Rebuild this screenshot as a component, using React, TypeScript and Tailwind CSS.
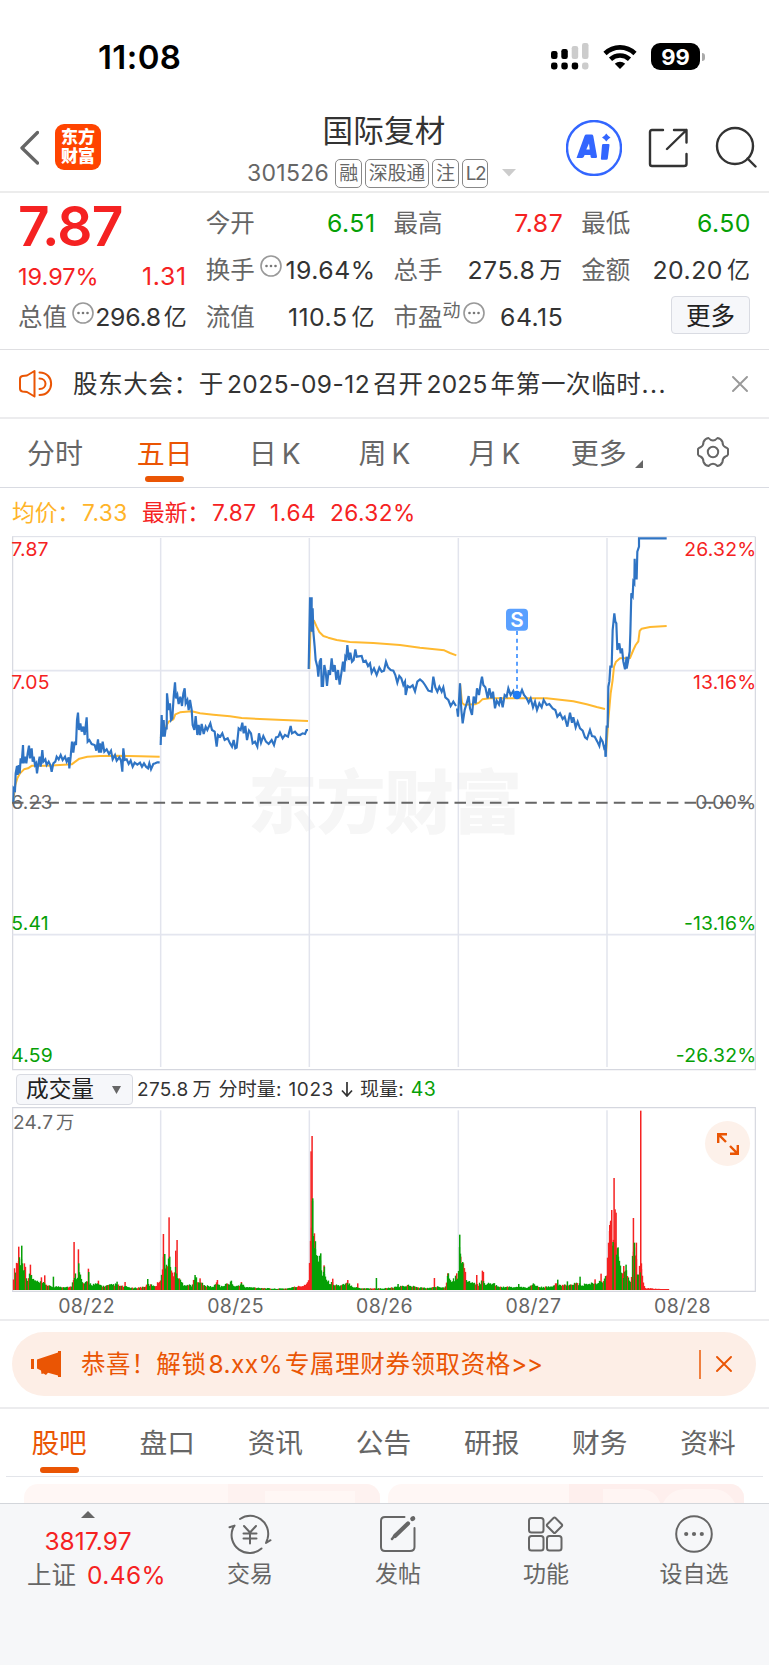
import type { ReactNode } from "react";

const RED = "#f52222";
const GREEN = "#06a006";

/* ---------- chart data (3x device pixels) ---------- */

const PRICE_LINES = [
  "40,965 41,925 45,930 47,880 51,858 53,885 56,855 59,880 62,835 65,850 69,795 71,850 75,830 79,850 83,820 87,797 90,835 95,805 98,845 101,830 105,855 108,850 111,880 115,850 119,830 122,860 127,810 130,845 136,838 140,855 146,845 151,855 155,875 160,850 166,845 170,830 176,838 182,825 188,840 195,830 200,845 206,832 208,865 212,830 216,785 220,818 224,785 228,795 231,720 234,698 237,750 241,730 245,755 250,740 254,765 260,712 263,785 268,780 275,792 284,795 289,812 294,778 297,818 300,790 303,818 308,785 313,815 320,808 327,822 333,812 338,838 345,825 350,842 358,832 363,842 367,875 370,805 374,840 380,838 386,852 392,842 398,860 404,848 412,854 420,848 426,860 432,850 438,860 444,865 448,850 453,868 460,852 466,850 472,847 479,847",
  "482,795 485,705 488,770 491,720 494,770 497,745 500,745 501,640 506,690 510,670 513,720 517,715 521,650 525,607 528,655 532,645 536,672 541,650 546,678 550,640 554,625 557,670 562,660 566,690 570,660 575,690 578,735 583,750 587,708 592,765 596,735 600,765 605,732 611,762 617,740 622,750 631,730 636,750 644,755 650,800 654,765 661,770 667,760 674,780 683,775 690,790 696,800 701,780 706,805 710,803 716,745 722,750 727,728 731,760 736,738 741,780 747,752 753,760 758,790 765,785 772,800 777,760 783,788 790,768 798,785 806,792 815,780 822,795 828,772 835,770 840,758 848,775 855,765 864,770 872,738 876,760 885,755 893,764 900,765 908,760 915,762 920,750 924,750",
  "926,567 930,355 935,355 935,455 938,385 940,455 944,500 947,540 952,560 955,590 959,545 963,535 965,618 969,618 973,555 977,575 981,618 986,570 990,585 995,535 999,575 1004,555 1009,600 1014,570 1019,614 1024,580 1029,545 1033,575 1036,530 1039,535 1042,495 1047,540 1051,518 1056,545 1061,540 1066,508 1070,530 1085,528 1090,545 1097,542 1104,558 1110,550 1115,578 1122,565 1130,585 1138,563 1145,575 1152,572 1158,545 1164,562 1172,570 1180,572 1186,585 1192,608 1198,588 1204,595 1210,615 1215,605 1217,645 1223,618 1230,622 1238,616 1245,634 1252,605 1260,598 1268,605 1275,615 1285,632 1295,635 1300,590 1306,622 1312,635 1318,620 1325,635 1330,622 1336,652 1345,660 1352,678 1360,665 1368,678",
  "1371,685 1374,710 1380,610 1384,690 1388,730 1394,690 1400,670 1406,648 1410,685 1416,705 1421,650 1427,670 1431,625 1437,645 1443,605 1446,590 1450,615 1456,622 1463,655 1468,625 1474,655 1479,635 1485,685 1490,662 1497,674 1502,652 1508,682 1514,645 1520,650 1525,625 1532,645 1540,633 1546,650 1551,643 1556,650 1560,645 1566,630 1572,645 1580,655 1586,668 1592,655 1599,682 1605,665 1611,690 1618,670 1625,682 1631,660 1640,675 1648,672 1658,685 1666,690 1672,710 1680,700 1688,717 1694,710 1702,740 1710,698 1716,728 1720,712 1727,742 1733,725 1740,745 1748,752 1755,772 1761,777 1770,750 1776,768 1784,770 1792,785 1798,798 1802,775 1808,785 1812,802 1815,795 1817,830",
  "1817,830 1820,740 1823,740 1825,620 1828,605 1831,560 1835,560 1838,450 1843,400 1846,425 1849,430 1852,510 1858,490 1862,520 1866,505 1870,545 1875,568 1880,530 1880,566 1884,545 1889,515 1891,460 1894,340 1898,348 1900,305 1903,310 1904,236 1906,295 1910,295 1912,215 1917,200 1917,175 2000,175",
];

const AVG_LINES = [
  "40,960 46,915 52,895 60,880 72,868 84,865 96,857 140,857 180,855 215,853 230,842 238,836 262,830 300,828 350,827 420,829 479,830",
  "482,775 486,760 494,755 500,735 506,725 520,718 526,703 540,697 575,694 600,700 640,704 690,709 725,714 780,717 850,720 924,723",
  "928,567 931,460 936,420 942,422 950,440 958,456 970,468 985,473 1010,480 1050,486 1120,489 1200,495 1260,503 1333,511 1350,519 1369,526",
  "1380,610 1386,668 1392,674 1425,673 1437,668 1447,658 1470,655 1560,655 1640,655 1680,659 1720,664 1760,673 1790,681 1815,687",
  "1818,820 1825,720 1832,640 1838,600 1842,560 1848,545 1860,535 1890,534 1900,510 1907,495 1915,484 1919,453 1925,446 1950,441 2000,438",
];

const DAY_LINES = [482, 928, 1375, 1821];

// rough outline of the volume profile: [x, height]
const VOLUME_OUTLINE: [number, number][] = [
  [40, 45], [50, 90], [58, 100], [66, 90], [74, 75], [82, 35], [92, 50], [100, 32], [115, 24], [135, 20], [150, 11],
  [215, 10], [222, 50], [228, 45], [238, 55], [248, 20], [262, 24], [275, 18], [295, 18], [310, 12], [345, 18],
  [365, 12], [380, 10], [400, 6], [430, 10], [445, 17], [468, 14], [480, 35], [486, 60], [492, 105], [500, 70],
  [508, 95], [515, 50], [526, 62], [535, 38], [550, 18], [575, 15], [585, 38], [600, 28], [612, 14], [640, 10],
  [650, 25], [662, 10], [690, 24], [705, 10], [725, 20], [735, 9], [780, 7], [820, 4], [860, 5], [880, 9],
  [910, 14], [926, 30], [930, 200], [938, 250], [943, 150], [950, 110], [960, 95], [966, 60], [973, 55], [982, 26],
  [1000, 20], [1020, 13], [1045, 22], [1060, 10], [1080, 6], [1120, 5], [1150, 5], [1180, 8], [1195, 10], [1225, 15],
  [1255, 8], [1290, 6], [1300, 10], [1335, 10], [1343, 45], [1352, 28], [1372, 42], [1378, 120], [1384, 90],
  [1392, 75], [1400, 30], [1415, 22], [1435, 15], [1448, 36], [1456, 20], [1482, 20], [1500, 10], [1550, 9],
  [1580, 8], [1602, 16], [1620, 9], [1650, 10], [1665, 18], [1685, 15], [1705, 14], [1720, 22], [1745, 16],
  [1770, 20], [1785, 22], [1800, 25], [1818, 42], [1822, 90], [1830, 190], [1840, 150], [1848, 150], [1856, 100],
  [1862, 65], [1870, 45], [1880, 60], [1888, 30], [1893, 25], [1897, 90], [1905, 120], [1912, 55], [1922, 70],
  [1930, 22], [1937, 6], [1965, 4], [2006, 2],
];

const VOLUME_SPIKES: [number, number, string][] = [
  [56, 130, RED], [65, 133, GREEN], [73, 80, RED], [91, 76, RED], [124, 38, RED], [134, 44, RED], [160, 40, GREEN],
  [222, 144, RED], [235, 122, RED], [236, 80, GREEN], [265, 64, RED], [266, 54, GREEN], [295, 28, RED],
  [351, 25, GREEN], [375, 24, RED], [443, 33, GREEN], [490, 168, RED], [494, 108, GREEN], [507, 218, RED],
  [509, 100, GREEN], [531, 150, RED], [527, 118, RED], [585, 45, GREEN], [600, 35, RED], [652, 30, RED],
  [694, 28, GREEN], [724, 24, RED], [933, 416, RED], [936, 462, RED], [938, 275, GREEN], [943, 170, RED],
  [946, 122, GREEN], [962, 110, GREEN], [972, 74, RED], [973, 70, GREEN], [998, 34, RED], [1043, 30, RED],
  [1073, 20, RED], [1129, 36, GREEN], [1194, 18, GREEN], [1303, 36, RED], [1343, 50, RED], [1345, 50, GREEN],
  [1370, 50, RED], [1379, 166, GREEN], [1382, 100, RED], [1388, 84, GREEN], [1430, 45, RED], [1447, 58, RED],
  [1450, 54, RED], [1556, 18, GREEN], [1600, 20, GREEN], [1673, 31, GREEN], [1702, 26, GREEN], [1740, 40, GREEN],
  [1785, 32, RED], [1803, 49, RED], [1829, 195, RED], [1832, 208, RED], [1835, 240, RED], [1842, 336, RED],
  [1845, 242, RED], [1848, 232, RED], [1839, 144, GREEN], [1854, 128, GREEN], [1871, 72, RED], [1878, 76, GREEN],
  [1900, 216, RED], [1903, 142, GREEN], [1909, 142, RED], [1922, 538, RED], [1924, 80, RED],
];

function outlineAt(x: number) {
  for (let i = 1; i < VOLUME_OUTLINE.length; i++) {
    const [x1, h1] = VOLUME_OUTLINE[i];
    const [x0, h0] = VOLUME_OUTLINE[i - 1];
    if (x <= x1) return h0 + ((h1 - h0) * (x - x0)) / (x1 - x0);
  }
  return 0;
}

// days open / rally with mostly red bars, everything else leans green
function redShare(x: number) {
  if (x < 56 || (x > 465 && x < 500) || (x > 510 && x < 532)) return 0.8;
  if (x > 890 && x < 936) return 0.95;
  if (x > 1820 && x < 1850) return 0.85;
  if (x > 1890) return x > 1925 ? 1 : 0.5;
  return 0.2;
}

const volumeBars = Array.from({ length: 656 }, (_, i) => {
  const x = 40 + i * 3;
  const a = Math.abs(Math.sin(i * 12.9898) * 43758.5453) % 1;
  const b = Math.abs(Math.sin(i * 78.233) * 12543.123) % 1;
  const h = Math.max(3, outlineAt(x) * (0.7 + 0.45 * a));
  return { x, h, color: b < redShare(x) ? RED : GREEN };
});

/* ---------- small icons ---------- */

function DotsIcon({ className = "" }: { className?: string }) {
  return (
    <svg viewBox="0 0 22 22" className={`h-[22px] w-[22px] shrink-0 ${className}`} fill="none">
      <circle cx="11" cy="11" r="10" stroke="#999" strokeWidth="1.6" />
      <circle cx="6.5" cy="11" r="1.3" fill="#777" />
      <circle cx="11" cy="11" r="1.3" fill="#777" />
      <circle cx="15.5" cy="11" r="1.3" fill="#777" />
    </svg>
  );
}

function CloseIcon({ color, width }: { color: string; width: number }) {
  return (
    <svg viewBox="0 0 16 16" className="h-4 w-4" stroke={color} strokeWidth={width} strokeLinecap="round">
      <path d="M1 1L15 15M15 1L1 15" />
    </svg>
  );
}

function StatusBar() {
  return (
    <div className="flex h-[108px] items-start pt-[39px]">
      <span className="ml-[98px] w-[453px] text-[33px] font-semibold leading-9 tracking-[0.4px] text-black">11:08</span>
      <svg viewBox="0 0 38 28" className="mt-1 h-7 w-[38px]">
        <rect x="0" y="8" width="6.5" height="8" rx="2.2" />
        <rect x="10.3" y="6" width="6.5" height="10" rx="2.2" />
        <rect x="20.7" y="3" width="6.5" height="13" rx="2.2" fill="#ccc" />
        <rect x="31" y="0" width="6.5" height="16" rx="2.2" fill="#ccc" />
        <rect x="0" y="19.5" width="6.5" height="7" rx="2.4" />
        <rect x="10.3" y="19.5" width="6.5" height="7" rx="2.4" />
        <rect x="20.7" y="19.5" width="6.5" height="7" rx="2.4" />
        <rect x="31" y="19.5" width="6.5" height="7" rx="2.4" fill="#ccc" />
      </svg>
      <svg viewBox="0 0 34 26" className="ml-3.5 mt-[5px] h-[26px] w-[34px]" fill="none" stroke="#000" strokeWidth="4.6">
        <path d="M2 9.5C10.5 1.3 23.5 1.3 32 9.5" />
        <path d="M7.5 15.3C13 10.2 21 10.2 26.5 15.3" />
        <path d="M17 25L11.8 19.7C14.7 17 19.3 17 22.2 19.7Z" fill="#000" stroke="none" />
      </svg>
      <div className="ml-[14px] mt-[4px] flex h-[27px] w-[49px] items-center justify-center rounded-[9px] bg-black text-[22px] font-bold leading-none text-white">
        99
      </div>
      <div className="ml-0.5 mt-[14px] h-2 w-[3px] rounded-r-full bg-[#aaa]" />
    </div>
  );
}

function Badge({ children }: { children: ReactNode }) {
  return (
    <span className="flex h-[29px] items-center rounded-[5px] border border-[#888] px-[3px] text-[19px] leading-none tracking-[-0.3px] text-[#666]">
      {children}
    </span>
  );
}

function Header() {
  return (
    <header className="flex h-[85px] border-b-2 border-[#ececec]">
      <div className="flex w-[248px] items-start pl-[19px] pt-4">
        <svg viewBox="0 0 20 36" className="mt-[6px] h-9 w-5" fill="none" stroke="#666" strokeWidth="3.3" strokeLinecap="round" strokeLinejoin="round">
          <path d="M18.5 2.5L3 18L18.5 33" />
        </svg>
        <div className="ml-4 flex h-[46px] w-[46px] flex-col items-center justify-center rounded-[9px] bg-[#ff4400] text-[17px] font-black leading-[19px] text-white">
          <span>东方</span>
          <span>财富</span>
        </div>
      </div>

      <div className="flex w-[272px] flex-col items-center">
        <h1 className="mt-[3px] h-[45px] text-[30.5px] leading-10 tracking-[0.2px] text-[#333]">国际复材</h1>
        <div className="mt-[2px] flex h-[30px] items-center gap-[3px] whitespace-nowrap pr-[5px]">
          <span className="mr-[3px] text-[23px] tracking-[0.3px] text-[#666]">301526</span>
          <Badge>融</Badge>
          <Badge>深股通</Badge>
          <Badge>注</Badge>
          <Badge>
            <span className="-mr-px tracking-[-1.5px]">L2</span>
          </Badge>
          <svg viewBox="0 0 14 8" className="ml-[11px] h-2 w-[14px]" fill="#ccc">
            <path d="M0 0H14L7 7.5Z" />
          </svg>
        </div>
      </div>

      <div className="flex flex-1 items-start pl-[46px] pt-3">
        <svg viewBox="0 0 56 56" className="h-14 w-14" fill="#3366ff">
          <circle cx="28" cy="28" r="27" fill="none" stroke="#3366ff" strokeWidth="2.4" />
          <path fillRule="evenodd" d="M10.5 38L18.5 16Q19 14.6 20.5 14.6H25.5Q27 14.6 27.3 16L31 36.5Q31.2 38 29.7 38H26Q24.8 38 24.6 36.8L24.4 35H18.6L18 36.6Q17.5 38 16 38ZM20.3 29.5H23.7L23 23.5Z" />
          <path d="M37.3 24H42.5Q43.7 24 43.5 25.2L41.8 38.6Q41.6 39.8 40.4 39.8H36Q34.7 39.8 34.9 38.6L36 25.2Q36.1 24 37.3 24Z" />
          <path d="M40.3 13.5L42.2 15.8L44.5 17.5L42.2 19.3L40.3 21.6L38.4 19.3L36 17.5L38.4 15.8Z" />
        </svg>
        <svg viewBox="0 0 40 40" className="ml-[26px] mt-2 h-10 w-10" fill="none" stroke="#333" strokeWidth="2.4" strokeLinecap="round" strokeLinejoin="round">
          <path d="M15 2H4Q2 2 2 4V36Q2 38 4 38H36Q38.5 38 38.5 36V26" />
          <path d="M26 2H38.5V14.5M38.5 2L19 21" />
        </svg>
        <svg viewBox="0 0 42 42" className="ml-[27px] mt-[6px] h-[42px] w-[42px]" fill="none" stroke="#333" strokeWidth="2.4" strokeLinecap="round">
          <circle cx="20" cy="20" r="18" />
          <path d="M32.5 32.5L40.5 40.5" />
        </svg>
      </div>
    </header>
  );
}

/* ---------- quote ---------- */

function QuoteCell({ label, extra, value, unit, color = "text-[#333]", tight = false }: {
  label: string;
  extra?: ReactNode;
  value: string;
  unit?: string;
  color?: string;
  tight?: boolean;
}) {
  return (
    <div className="flex h-[47px] items-center whitespace-nowrap leading-none">
      <span className="text-[24.5px] text-[#666]">{label}</span>
      {extra}
      <span
        className={`ml-auto text-[24.8px] ${tight ? "tracking-[-0.3px]" : "tracking-[0.5px]"} ${unit ? "" : "-mr-px"} ${color}`}
      >
        {value}
      </span>
      {unit && <span className={`text-[23px] text-[#333] ${tight ? "ml-[3px]" : "ml-[4px]"}`}>{unit}</span>}
    </div>
  );
}

function Quote() {
  return (
    <section className="grid h-[157px] grid-cols-4 gap-x-[19px] border-b border-[#dfdfe2] pl-[18px] pr-[19px]">
      <div>
        <div className="flex h-[66px] items-center text-[55px] font-semibold tracking-[-0.8px] text-[#f52222]">7.87</div>
        <div className="flex h-[35px] items-center justify-between text-[24.8px] leading-none text-[#f52222]">
          <span className="text-[23.5px]">19.97%</span>
          <span className="tracking-[0.7px]">1.31</span>
        </div>
        <QuoteCell label="总值" extra={<DotsIcon className="-mt-2.5 ml-[5px]" />} value="296.8" unit="亿" tight />
      </div>
      <div className="pt-[7px]">
        <QuoteCell label="今开" value="6.51" color="text-[#06a006]" />
        <QuoteCell label="换手" extra={<DotsIcon className="-mt-2.5 ml-[5px]" />} value="19.64%" />
        <QuoteCell label="流值" value="110.5" unit="亿" />
      </div>
      <div className="pt-[7px]">
        <QuoteCell label="最高" value="7.87" color="text-[#f52222]" />
        <QuoteCell label="总手" value="275.8" unit="万" />
        <QuoteCell
          label="市盈"
          extra={
            <>
              <span className="-mt-3.5 text-[18px] text-[#666]">动</span>
              <DotsIcon className="-mt-2.5 ml-[2px]" />
            </>
          }
          value="64.15"
        />
      </div>
      <div className="pt-[7px]">
        <QuoteCell label="最低" value="6.50" color="text-[#06a006]" />
        <QuoteCell label="金额" value="20.20" unit="亿" />
        <button className="ml-auto mt-[2px] flex h-[38px] w-[79px] items-center justify-center rounded-[4px] border border-[#d9dbe2] bg-[#f6f7fa] pt-[2px] text-[24.5px] leading-none text-[#222]">
          更多
        </button>
      </div>
    </section>
  );
}

function Notice() {
  return (
    <section className="flex h-[69px] items-center border-b-2 border-[#ececee] pr-[21px] pt-px">
      <svg viewBox="0 0 34 28" className="ml-[19px] h-7 w-[34px]" fill="none" stroke="#ea5504" strokeWidth="2" strokeLinecap="round" strokeLinejoin="round">
        <path d="M15.5 1L8 5.5L3.5 6Q1 6.5 1 9V18.5Q1 21 3.5 21.5L8 22L15.5 26.5Z" />
        <path d="M20.5 2.5C36 2.5 36 25 20.5 25M20.5 8.5C28.5 8.5 28.5 19 20.5 19" />
      </svg>
      <div className="ml-[20px] flex items-center whitespace-nowrap text-[24.5px] leading-none tracking-[0.65px] text-[#333]">
        <span>股东大会：</span>
        <span>于</span>
        <span className="mx-[3px] tracking-[0.5px]">2025-09-12</span>
        <span>召开</span>
        <span className="mx-[3px] tracking-[0.2px]">2025</span>
        <span>年第一次临时<span className="tracking-[1.5px]">...</span></span>
      </div>
      <span className="ml-auto">
        <CloseIcon color="#999" width={1.9} />
      </span>
    </section>
  );
}

const CHART_TABS = [
  { name: "分时" },
  { name: "五日", active: true },
  { name: "日", suffix: "K" },
  { name: "周", suffix: "K" },
  { name: "月", suffix: "K" },
];

function ChartTabs() {
  return (
    <nav className="grid h-[69px] grid-cols-7 border-b border-[#d9dbe2] text-[28px] leading-none text-[#666]">
      {CHART_TABS.map((t) => (
        <div
          key={t.name}
          className={`relative flex items-center justify-center pt-[2px] ${t.active ? "text-[#ea5504]" : ""}`}
        >
          {t.name}
          {t.suffix && <span className="ml-[5px]">{t.suffix}</span>}
          {t.active && <span className="absolute bottom-[5px] h-[6px] w-[39px] rounded-full bg-[#ea5504]" />}
        </div>
      ))}
      <div className="flex items-center justify-center pl-[5px] pt-[2px]">
        更多
        <svg viewBox="0 0 8 8" className="ml-2 mt-[19px] h-2 w-2" fill="#666">
          <path d="M8 0V8H0Z" />
        </svg>
      </div>
      <div className="flex items-center justify-center pb-[3px] pr-[3px]">
        <svg viewBox="0 0 32 32" className="h-8 w-8" fill="none" stroke="#666" strokeWidth="2" strokeLinejoin="round">
          <path d="M11.5 2Q13.5 4.5 16 4.5Q18.5 4.5 20.5 2Q24 2.5 25.5 6Q25.5 9.5 28 11Q30.5 12 31 13Q31 16 31 18.5Q30.5 20 28.5 20.5Q25.5 22 25.5 26Q24 29.5 20.5 30Q18.5 27.7 16 27.7Q13.5 27.7 11.5 30Q8 29.5 6.5 26Q6.5 22 3.5 20.5Q1.5 20 1 18.5Q1 16 1 13Q1.5 12 4 11Q6.5 9.5 6.5 6Q8 2.5 11.5 2Z" />
          <circle cx="16" cy="16" r="5.2" />
        </svg>
      </div>
    </nav>
  );
}

/* ---------- charts ---------- */

function Legend() {
  return (
    <div className="flex h-[48px] items-center whitespace-nowrap pl-[12px] pt-[2px] text-[22.7px] leading-none text-[#f52222]">
      <span className="w-[70px] text-[#ffb429]">均价：</span>
      <span className="w-[60px] tracking-[0.4px] text-[#ffb429]">7.33</span>
      <span className="w-[70px]">最新：</span>
      <span className="w-[58px] tracking-[0.4px]">7.87</span>
      <span className="w-[60px] tracking-[0.6px]">1.64</span>
      <span className="tracking-[0.4px]">26.32%</span>
    </div>
  );
}

const AXIS_LABELS = [
  { y: 228, left: "7.87", right: "26.32%", color: RED },
  { y: 627, left: "7.05", right: "13.16%", color: RED },
  { y: 986, left: "6.23", right: "0.00%", color: "#666" },
  { y: 1349, left: "5.41", right: "-13.16%", color: GREEN },
  { y: 1746, left: "4.59", right: "-26.32%", color: GREEN },
];

function PriceChart() {
  return (
    <svg viewBox="0 168 2307 1605" className="h-[535px] w-[769px]" fill="none">
      <text x="744" y="1044" fontSize="208" fontWeight="900" fill="#f6f6f6" textLength="822">
        东方财富
      </text>
      <path d="M36 170H2266" stroke="#dcdee6" strokeWidth="3" />
      <path d="M38 170V1769H2266V170" stroke="#d5d7df" strokeWidth="3.5" />
      <path d="M38 572H2266M38 1364H2266" stroke="#e4e6ef" strokeWidth="5" />
      {DAY_LINES.map((x) => (
        <path key={x} d={`M${x} 174V1761`} stroke="#e2e4ed" strokeWidth="4.5" />
      ))}
      {AXIS_LABELS.map((l) => (
        <g key={l.y} fontSize="58" letterSpacing="0.6" fill={l.color}>
          <text x="34" y={l.y}>{l.left}</text>
          <text x="2269" y={l.y} textAnchor="end">{l.right}</text>
        </g>
      ))}
      <path d="M36 968H2266" stroke="#666" strokeWidth="6" strokeDasharray="34.5 18.6" />
      {AVG_LINES.map((p) => (
        <polyline key={p} points={p} stroke="#ffb930" strokeWidth="6" strokeLinejoin="round" />
      ))}
      {PRICE_LINES.map((p) => (
        <polyline key={p} points={p} stroke="#2f74c4" strokeWidth="6.5" />
      ))}

      {/* sell marker */}
      <path d="M1551 453V632" stroke="#5aa0ff" strokeWidth="6" strokeDasharray="12 11" />
      <circle cx="1551" cy="645" r="13" fill="#1f7cf5" />
      <rect x="1518" y="386" width="66" height="66" rx="12" fill="#5aa0ff" />
      <text x="1551" y="442" fontSize="62" fontWeight="600" fill="#fff" textAnchor="middle">S</text>
    </svg>
  );
}

function VolumeHeader() {
  return (
    <div className="flex h-[36px] items-center whitespace-nowrap pl-4 pt-px text-[19px] leading-none tracking-[0.1px] text-[#333]">
      <div className="mr-[4px] flex h-[31px] w-[117px] items-center rounded-[4px] border border-[#d9dbe2] bg-[#f6f7fa] pl-[9px] text-[22.7px] tracking-normal text-[#222]">
        成交量
        <svg viewBox="0 0 9 8" className="ml-[18px] h-2 w-[9px]" fill="#666">
          <path d="M0 0H9L4.5 8Z" />
        </svg>
      </div>
      <span className="tracking-[0.3px]">275.8</span>
      <span className="ml-1">万</span>
      <span className="ml-[7px]">分时量:</span>
      <span className="ml-[7px] tracking-[0.6px]">1023</span>
      <svg viewBox="0 0 12 15" className="mx-[7px] h-[15px] w-3" fill="none" stroke="#333" strokeWidth="1.7">
        <path d="M6 0V14M1 8.5L6 14L11 8.5" />
      </svg>
      <span>现量:</span>
      <span className="ml-[7px] text-[19.5px] tracking-[0.5px] text-[#06a006]">43</span>
    </div>
  );
}

function VolumeChart() {
  return (
    <div className="relative h-[186px]">
      <svg viewBox="0 141 2307 558" className="h-[186px] w-[769px]" fill="none">
        <path d="M38 694V143H2266V694Z" stroke="#d5d7df" strokeWidth="3.5" />
        {DAY_LINES.map((x) => (
          <path key={x} d={`M${x} 151V690`} stroke="#e2e4ed" strokeWidth="4.5" />
        ))}
        <text x="39" y="208" fontSize="57" letterSpacing="1" fill="#666">24.7</text>
        <text x="168" y="208" fontSize="55" fill="#666">万</text>
        {VOLUME_SPIKES.filter((s) => s[2] === RED).map(([x, h, color]) => (
          <rect key={`${x}-${h}`} x={x - 2} y={690 - h} width="4.5" height={h} fill={color} />
        ))}
        {volumeBars.map((b) => (
          <rect key={b.x} x={b.x - 1.5} y={690 - b.h} width="4" height={b.h} fill={b.color} />
        ))}
        {VOLUME_SPIKES.filter((s) => s[2] === GREEN).map(([x, h, color]) => (
          <rect key={`${x}-${h}`} x={x - 2} y={690 - h} width="4.5" height={h} fill={color} />
        ))}
      </svg>
      <button className="absolute right-[19px] top-[14px] flex h-[45px] w-[45px] items-center justify-center rounded-full bg-[#fdf1ea]">
        <svg viewBox="0 0 22 22" className="h-[22px] w-[22px]" fill="none" stroke="#ea5504" strokeWidth="2.4">
          <path d="M1.2 10V1.2H10M1.2 1.2L9 9M13 20.8H20.8V12M20.8 20.8L13 13" />
        </svg>
      </button>
    </div>
  );
}

function Dates() {
  return (
    <div className="flex h-[28px] items-center border-b-2 border-[#ececee] px-[12px] pt-[2px] text-[19.5px] leading-none tracking-[0.3px] text-[#666]">
      {["08/22", "08/25", "08/26", "08/27", "08/28"].map((d) => (
        <span key={d} className="flex-1 text-center">{d}</span>
      ))}
    </div>
  );
}

/* ---------- lower part ---------- */

function Banner() {
  return (
    <section className="h-[88px] border-b-2 border-[#ececee] pl-[12px] pr-[13px] pt-[11px]">
      <div className="flex h-16 items-center whitespace-nowrap rounded-full bg-[#fdeee6] text-[24.5px] leading-none text-[#ea5504]">
        <svg viewBox="0 0 30 26" className="ml-[19px] h-[26px] w-[30px]" fill="#ea5504">
          <path d="M0 8H3V18H0ZM6 8.5L27 1.5V0H30V26H27V24.5L17 21.8L15 24L12.5 22.5L10.5 23L10 19.5L6 17.5Z" />
        </svg>
        <span className="ml-[20px] mt-px tracking-[0.6px]">恭喜！解锁</span>
        <span className="mx-[2px] mt-px tracking-[0.4px]">8.xx%</span>
        <span className="mt-px tracking-[0.6px]">专属理财券领取资格<span className="tracking-[-0.4px]">&gt;&gt;</span></span>
        <span className="ml-auto mr-[15px] h-[29px] w-[2px] bg-[#f0803f]" />
        <span className="mr-[24px]">
          <CloseIcon color="#ea5504" width={1.9} />
        </span>
      </div>
    </section>
  );
}

function InfoTabs() {
  return (
    <nav className="mx-[6px] grid h-[68px] grid-cols-7 border-b border-[#e3e5ea] text-[27.7px] leading-none text-[#666]">
      {["股吧", "盘口", "资讯", "公告", "研报", "财务", "资料"].map((t, i) => (
        <div key={t} className={`relative flex items-center justify-center pr-[2px] pt-[3px] ${i === 0 ? "text-[#ea5504]" : ""}`}>
          {t}
          {i === 0 && <span className="absolute bottom-[3px] h-[6px] w-[39px] rounded-full bg-[#ea5504]" />}
        </div>
      ))}
    </nav>
  );
}

function Cards() {
  return (
    <div className="flex h-[26px] gap-2 overflow-hidden pl-6 pr-[25px] pt-[7px]">
      <div className="flex h-12 flex-1 justify-end overflow-hidden rounded-t-[14px] bg-[#fff7f5]">
        <div className="h-12 w-[152px] bg-[#fef2f0] pl-[37px] pt-[7px]">
          <div className="h-12 w-[90px] bg-[#fff7f5]" />
        </div>
      </div>
      <div className="flex h-12 flex-1 justify-end overflow-hidden rounded-t-[14px] bg-[#fff7f5]">
        <div className="flex h-12 w-[175px] bg-[#feefed] pl-[34px] pt-[5px]">
          <div className="h-12 w-[58px] rounded-tr-[20px] bg-[#fff5f3]" />
          <div className="h-12 w-[76px] rounded-t-[24px] bg-[#fff5f3]" />
        </div>
      </div>
    </div>
  );
}

function BarItem({ label, children }: { label: string; children: ReactNode }) {
  return (
    <div className="flex w-[148px] flex-col items-center pt-[10px] text-[23px] leading-none text-[#666]">
      <svg viewBox="0 0 42 40" className="h-10 w-[42px] overflow-visible" fill="none" stroke="#666" strokeWidth="2" strokeLinecap="round" strokeLinejoin="round">
        {children}
      </svg>
      <span className="mt-[9px]">{label}</span>
    </div>
  );
}

function BottomBar() {
  return (
    <footer className="flex h-[162px] border-t border-[#d3d6db] bg-[#f6f7f9]">
      <div className="flex w-[176px] flex-col items-center pt-[7px] text-[24.5px] leading-none text-[#f52222]">
        <svg viewBox="0 0 14 7" className="h-[7px] w-[14px]" fill="#666">
          <path d="M0 7L7 0L14 7Z" />
        </svg>
        <span className="mt-[11px] tracking-[0.1px]">3817.97</span>
        <div className="mt-[9px] flex items-center gap-[11px] pl-[17px]">
          <span className="text-[#666]">上证</span>
          <span className="tracking-[0.4px]">0.46%</span>
        </div>
      </div>
      <BarItem label="交易">
        <path d="M11 5A18 18 0 0 1 38.6 24.5L37 29L41.5 26.2" />
        <path d="M32.5 34.5A18 18 0 0 1 4 14L5.5 11.6L0.5 13.3" />
        <path d="M15 12L21 18.5L27 12M14.5 19.5H27.5M14.5 24.5H27.5M21 18.5V29.5" />
      </BarItem>
      <BarItem label="发帖">
        <path d="M27.5 3H8Q4 3 4 7V33Q4 37 8 37H33Q37.5 37 37.5 33V14" />
        <path d="M31 9.5L18 22" strokeWidth="4.2" />
        <path d="M19 20L15 25" strokeWidth="2.5" />
        <path d="M35.5 4.8L36 4.5" strokeWidth="4.6" />
      </BarItem>
      <BarItem label="功能">
        <rect x="4" y="4" width="14.5" height="14.5" rx="2.5" />
        <rect x="4" y="22" width="14.5" height="14.5" rx="2.5" />
        <rect x="22" y="22" width="14.5" height="14.5" rx="2.5" />
        <path d="M28.5 4Q29.5 3 30.5 4L36.7 10.3Q37.7 11.3 36.7 12.3L30.5 18.5Q29.5 19.5 28.5 18.5L22.3 12.3Q21.3 11.3 22.3 10.3Z" />
      </BarItem>
      <BarItem label="设自选">
        <circle cx="21" cy="20" r="17.8" />
        <g fill="#666" stroke="none">
          <circle cx="13.2" cy="20" r="2.1" />
          <circle cx="21" cy="20" r="2.1" />
          <circle cx="28.8" cy="20" r="2.1" />
        </g>
      </BarItem>
    </footer>
  );
}

export default function App() {
  return (
    <div className="flex h-[1665px] w-[769px] flex-col overflow-hidden bg-white font-['Inter','Noto_Sans_CJK_SC',sans-serif]">
      <StatusBar />
      <Header />
      <Quote />
      <Notice />
      <ChartTabs />
      <Legend />
      <PriceChart />
      <VolumeHeader />
      <VolumeChart />
      <Dates />
      <Banner />
      <InfoTabs />
      <Cards />
      <BottomBar />
    </div>
  );
}
